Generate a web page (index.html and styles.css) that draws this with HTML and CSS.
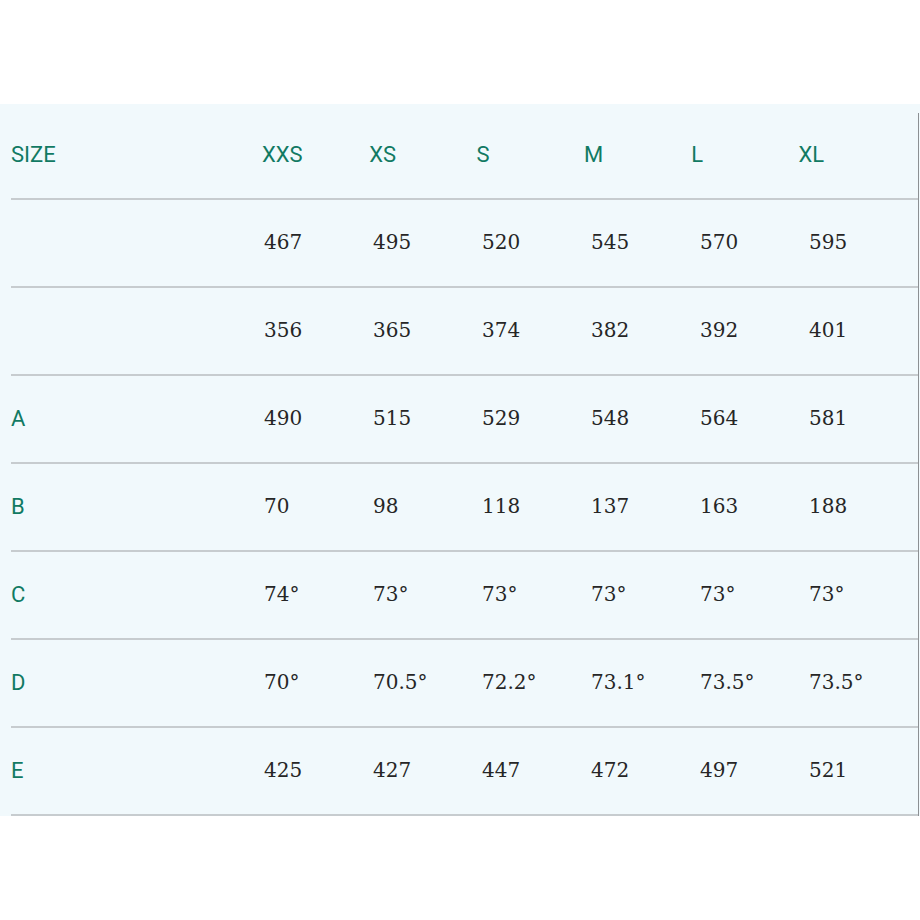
FILE: index.html
```html
<!DOCTYPE html>
<html>
<head>
<meta charset="utf-8">
<link rel="stylesheet" href="styles.css">
</head>
<body>
<div class="panel">
  <div class="row head">
    <div class="label">SIZE</div>
    <div class="h">XXS</div><div class="h">XS</div><div class="h">S</div><div class="h">M</div><div class="h">L</div><div class="h">XL</div>
  </div>
  <div class="row data">
    <div class="label"></div>
    <div class="v">467</div><div class="v">495</div><div class="v">520</div><div class="v">545</div><div class="v">570</div><div class="v">595</div>
  </div>
  <div class="row data">
    <div class="label"></div>
    <div class="v">356</div><div class="v">365</div><div class="v">374</div><div class="v">382</div><div class="v">392</div><div class="v">401</div>
  </div>
  <div class="row data">
    <div class="label">A</div>
    <div class="v">490</div><div class="v">515</div><div class="v">529</div><div class="v">548</div><div class="v">564</div><div class="v">581</div>
  </div>
  <div class="row data">
    <div class="label">B</div>
    <div class="v">70</div><div class="v">98</div><div class="v">118</div><div class="v">137</div><div class="v">163</div><div class="v">188</div>
  </div>
  <div class="row data">
    <div class="label">C</div>
    <div class="v">74°</div><div class="v">73°</div><div class="v">73°</div><div class="v">73°</div><div class="v">73°</div><div class="v">73°</div>
  </div>
  <div class="row data">
    <div class="label">D</div>
    <div class="v">70°</div><div class="v">70.5°</div><div class="v">72.2°</div><div class="v">73.1°</div><div class="v">73.5°</div><div class="v">73.5°</div>
  </div>
  <div class="row data">
    <div class="label">E</div>
    <div class="v">425</div><div class="v">427</div><div class="v">447</div><div class="v">472</div><div class="v">497</div><div class="v">521</div>
  </div>
</div>
</body>
</html>
```
FILE: styles.css
```css
html, body {
  margin: 0;
  padding: 0;
  background: #ffffff;
}
.panel {
  position: relative;
  margin-top: 104px;
  width: 920px;
  box-sizing: border-box;
  padding-left: 11px;
  padding-right: 2px;
  background: #f1f9fc;
}
.panel::after {
  content: "";
  position: absolute;
  right: 1px;
  top: 9px;
  bottom: 0;
  width: 1px;
  background: #8c9093;
}
.row {
  display: grid;
  align-items: center;
  border-bottom: 2px solid #c7cccf;
  box-sizing: border-box;
}
.head {
  grid-template-columns: 251px repeat(6, 107.3px);
  height: 96px;
  padding-top: 6px;
}
.data {
  grid-template-columns: 253px repeat(6, 109px);
  height: 88px;
  padding-bottom: 2px;
}
.label, .h {
  font-family: Roboto, "Liberation Sans", sans-serif;
  font-size: 22px;
  color: #117a63;
}
.data .label {
  padding-top: 1px;
}
.v {
  font-family: "DejaVu Serif", serif;
  font-size: 20px;
  color: #262626;
}
```
